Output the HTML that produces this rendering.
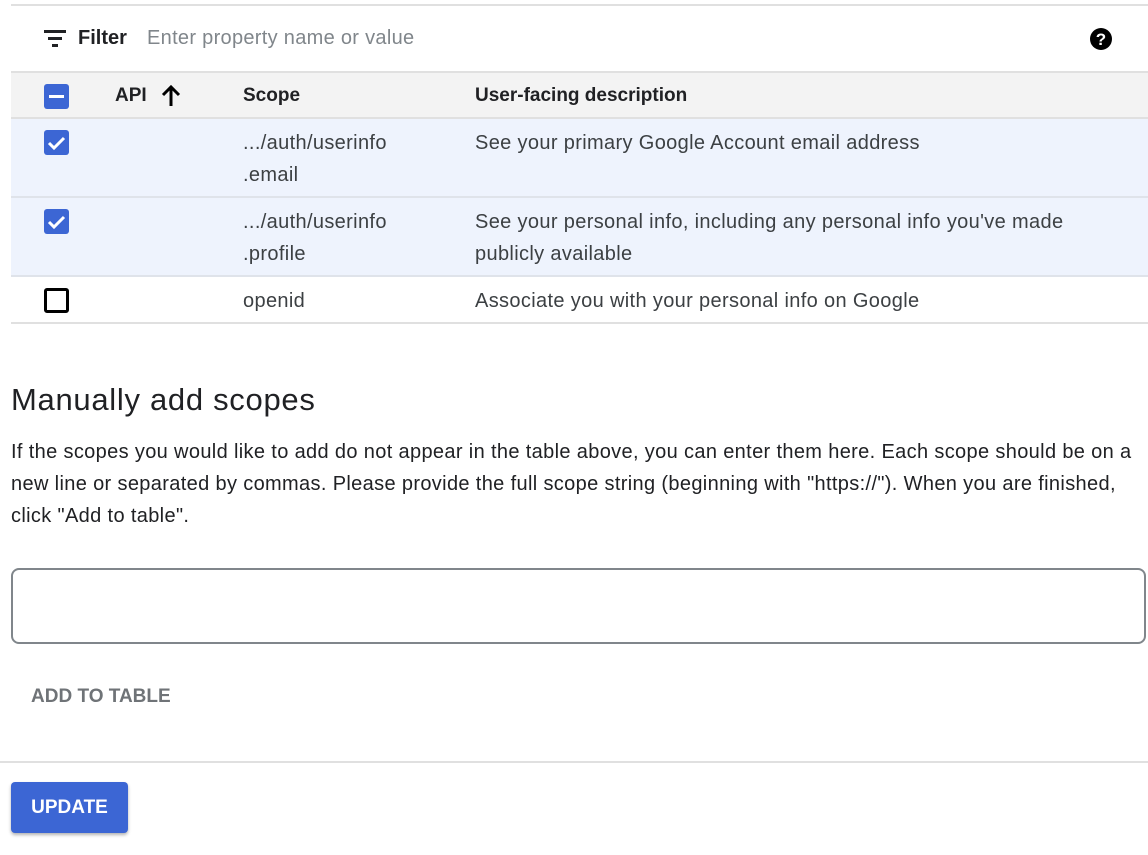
<!DOCTYPE html>
<html><head><style>
*{box-sizing:border-box;margin:0;padding:0}
body{width:1148px;height:855px;background:#fff;font-family:"Liberation Sans",Roboto,sans-serif;color:#3c4043;position:relative;overflow:hidden}
.a{position:absolute;white-space:nowrap}
.cb{position:absolute;left:44px;width:25px;height:25px;border-radius:3px;background:#3c66d4}
.t{font-size:20px;line-height:32px;color:#3c4043;letter-spacing:0.35px}
</style></head><body>
<div class="a" style="left:11px;top:4px;width:1137px;height:2px;background:#e0e0e0"></div>
<svg class="a" style="left:43px;top:28px" width="24" height="20" viewBox="0 0 24 20"><rect x="1" y="2" width="22" height="3" fill="#202124"/><rect x="5" y="9" width="14" height="3" fill="#202124"/><rect x="9" y="16" width="6" height="3" fill="#202124"/></svg>
<div class="a" style="left:78px;top:27px;font-size:20px;font-weight:bold;color:#202124">Filter</div>
<div class="a" style="left:147px;top:27px;font-size:20px;color:#80868b;letter-spacing:0.3px">Enter property name or value</div>
<svg class="a" style="left:1089px;top:27px" width="24" height="24" viewBox="0 0 24 24"><circle cx="12" cy="12" r="11" fill="#000"/><text x="12" y="18" font-size="17" font-weight="bold" text-anchor="middle" fill="#fff" font-family="Liberation Sans">?</text></svg>
<div class="a" style="left:11px;top:71px;width:1137px;height:48px;background:#f3f3f3;border-top:2px solid #e0e0e0;border-bottom:2px solid #e0e0e0"></div>
<div class="cb" style="top:84px"><div style="position:absolute;left:5px;top:11px;width:15px;height:3px;background:#fff"></div></div>
<div class="a" style="left:115px;top:85px;font-size:19px;font-weight:bold;color:#202124">API</div>
<svg class="a" style="left:160px;top:84px" width="22" height="24" viewBox="0 0 22 24"><path d="M11 22V3M3 11l8-8 8 8" stroke="#000" stroke-width="3" fill="none"/></svg>
<div class="a" style="left:243px;top:85px;font-size:19px;font-weight:bold;color:#202124">Scope</div>
<div class="a" style="left:475px;top:85px;font-size:19px;font-weight:bold;color:#202124">User-facing description</div>
<div class="a" style="left:11px;top:119px;width:1137px;height:79px;background:#eef3fd;border-bottom:2px solid #dfe3ea"></div>
<div class="a" style="left:11px;top:198px;width:1137px;height:79px;background:#eef3fd;border-bottom:2px solid #dfe3ea"></div>
<div class="a" style="left:11px;top:322px;width:1137px;height:2px;background:#e0e0e0"></div>
<div class="cb" style="top:130px"><svg width="25" height="25"><path d="M5 13l5 5 10-10" stroke="#fff" stroke-width="3" fill="none"/></svg></div>
<div class="cb" style="top:209px"><svg width="25" height="25"><path d="M5 13l5 5 10-10" stroke="#fff" stroke-width="3" fill="none"/></svg></div>
<div class="cb" style="top:288px;background:#fff;border:3px solid #000"></div>
<div class="a t" style="left:243px;top:127px">.../auth/userinfo<br>.email</div>
<div class="a t" style="left:475px;top:127px">See your primary Google Account email address</div>
<div class="a t" style="left:243px;top:206px">.../auth/userinfo<br>.profile</div>
<div class="a t" style="left:475px;top:206px">See your personal info, including any personal info you've made<br>publicly available</div>
<div class="a t" style="left:243px;top:285px">openid</div>
<div class="a t" style="left:475px;top:285px">Associate you with your personal info on Google</div>
<div class="a" style="left:11px;top:382px;font-size:31px;color:#202124;letter-spacing:0.7px">Manually add scopes</div>
<div class="a t" style="left:11px;top:436px;color:#202124">If the scopes you would like to add do not appear in the table above, you can enter them here. Each scope should be on a<br>new line or separated by commas. Please provide the full scope string (beginning with "https://"). When you are finished,<br>click "Add to table".</div>
<div class="a" style="left:11px;top:568px;width:1135px;height:76px;border:2px solid #80868b;border-radius:8px"></div>
<div class="a" style="left:31px;top:686px;font-size:19px;font-weight:bold;color:#6f7377">ADD TO TABLE</div>
<div class="a" style="left:0;top:761px;width:1148px;height:2px;background:#e0e0e0"></div>
<div class="a" style="left:11px;top:782px;width:117px;height:51px;background:#3c66d4;border-radius:4px;box-shadow:0 2px 3px rgba(0,0,0,.3);color:#fff;font-size:19px;font-weight:bold;text-align:center;line-height:51px">UPDATE</div>
</body></html>
